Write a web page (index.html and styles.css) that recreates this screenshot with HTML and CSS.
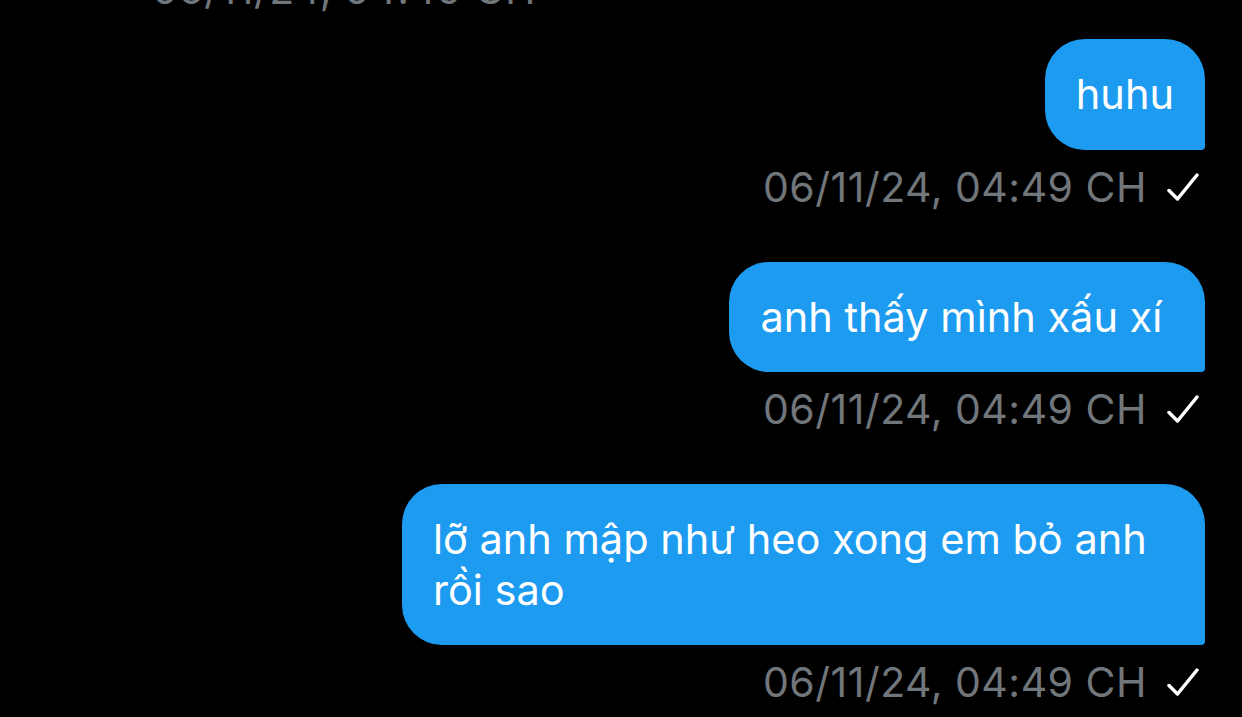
FILE: index.html
```html
<!DOCTYPE html>
<html lang="vi">
<head>
<meta charset="utf-8">
<link rel="stylesheet" href="styles.css">
</head>
<body>
<div class="chat">
  <div class="meta meta-in">06/11/24, 04:49 CH</div>

  <div class="msg">
    <div class="bubble">huhu</div>
    <div class="meta"><span>06/11/24, 04:49 CH</span><svg class="check" viewBox="0 0 32 28"><path d="M2 17.5 L10.5 26 L30 2"/></svg></div>
  </div>

  <div class="msg">
    <div class="bubble">anh thấy mình xấu xí&nbsp;</div>
    <div class="meta"><span>06/11/24, 04:49 CH</span><svg class="check" viewBox="0 0 32 28"><path d="M2 17.5 L10.5 26 L30 2"/></svg></div>
  </div>

  <div class="msg">
    <div class="bubble">lỡ anh mập như heo xong em bỏ anh rồi sao</div>
    <div class="meta"><span>06/11/24, 04:49 CH</span><svg class="check" viewBox="0 0 32 28"><path d="M2 17.5 L10.5 26 L30 2"/></svg></div>
  </div>
</div>
</body>
</html>
```

FILE: styles.css
```css
html, body {
  margin: 0;
  padding: 0;
  background: #000;
  height: 100%;
  overflow: hidden;
}
body {
  font-family: Inter, "Noto Sans", sans-serif;
  -webkit-font-smoothing: antialiased;
}
.chat {
  display: flex;
  flex-direction: column;
  padding: 0 37px 0 152px;
}
.msg {
  display: flex;
  flex-direction: column;
  align-items: flex-end;
  margin-bottom: 51px;
}
.bubble {
  background: #1d9bf0;
  color: #fff;
  font-size: 41.5px;
  line-height: 50.5px;
  padding: 30px 31px;
  border-radius: 40px 40px 4px 40px;
  max-width: 741px;
}
.meta {
  display: flex;
  align-items: center;
  gap: 20px;
  color: #71767b;
  font-size: 41px;
  letter-spacing: 0.5px;
  line-height: 48px;
  margin-top: 13px;
  font-weight: 400;
}
.meta.meta-in {
  margin-top: -35px;
  margin-bottom: 26px;
  justify-content: flex-start;
}
.check {
  width: 32px;
  height: 28px;
  margin-right: 6px;
  fill: none;
  stroke: #fff;
  stroke-width: 3.5;
  stroke-linecap: round;
  stroke-linejoin: round;
}
```
